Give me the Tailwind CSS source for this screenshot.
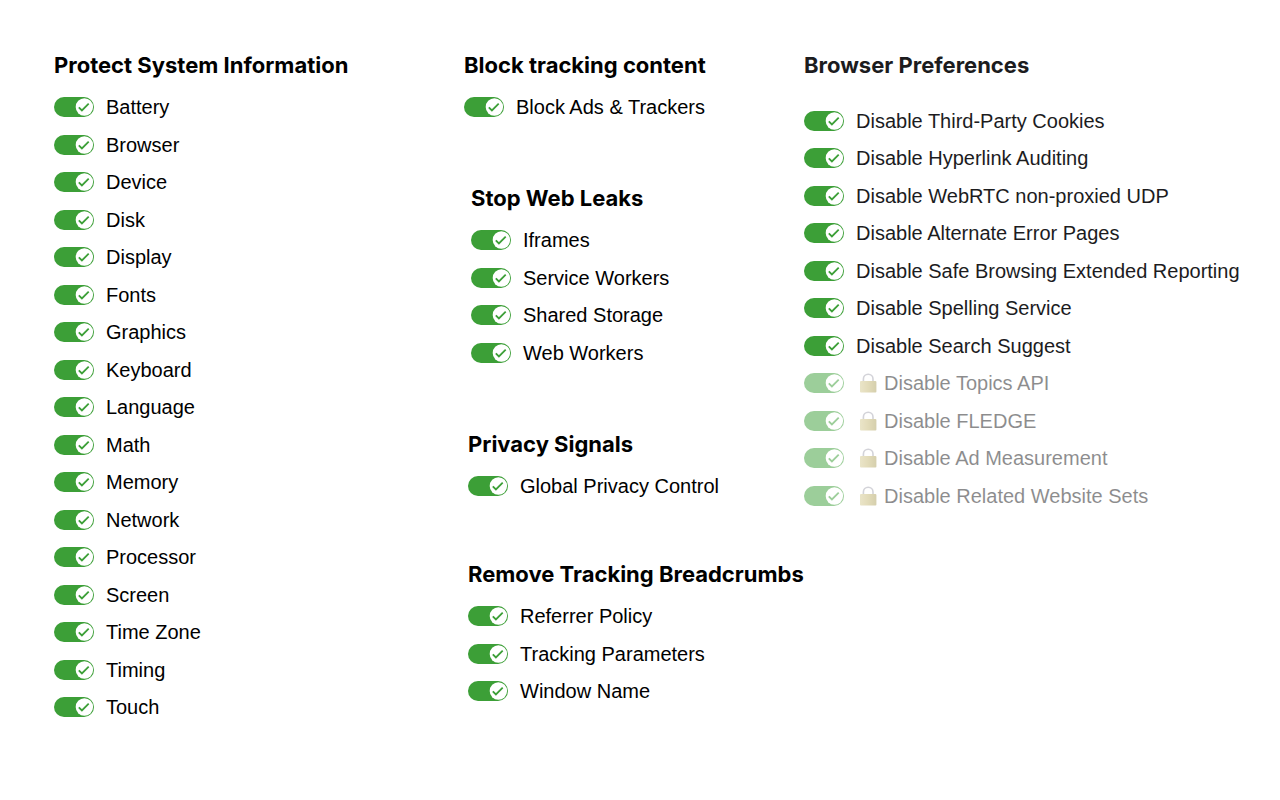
<!DOCTYPE html>
<html lang="en">
  <head>
    <meta charset="UTF-8" />
    <title>Privacy Settings</title>
    <meta name="viewport" content="width=device-width, initial-scale=1.0" />
    <script src="https://cdn.jsdelivr.net/npm/@tailwindcss/browser@4"></script>
  </head>

  <body class="bg-white text-black font-['Liberation_Sans',Arial,sans-serif]">
    <!-- Icons -->
    <svg class="absolute size-0">
      <defs>
        <linearGradient id="brass" x1="0" x2="1" y1="0" y2="0">
          <stop offset="0" stop-color="#d6cb93" />
          <stop offset=".45" stop-color="#c9bb78" />
          <stop offset="1" stop-color="#aca05c" />
        </linearGradient>
      </defs>
      <symbol id="knob" viewBox="0 0 40 20">
        <circle cx="30.4" cy="10" r="8.7" fill="#fff" />
        <path d="M24.8 10.4l3.1 3.1 6.8-6.8" fill="none" stroke="#3c9f37" stroke-width="1.8" />
      </symbol>
      <symbol id="lock" viewBox="0 0 18 20">
        <path d="M3.4 9V6a4.8 4.8 0 0 1 9.6 0V9" fill="none" stroke="#a9a9b4" stroke-width="1.6" />
        <rect x="0" y="8" width="16.4" height="11.4" rx="1" fill="url(#brass)" />
      </symbol>
    </svg>

    <main class="grid grid-cols-[minmax(0,410fr)_minmax(0,340fr)_minmax(0,476fr)] items-start pl-[54px] pt-[51px] pb-12">
      <section>
        <h2 class="mb-[9px] whitespace-nowrap font-['Inter',sans-serif] text-[22px] leading-7 font-bold">Protect System Information</h2>
        <ul data-group="system"></ul>
      </section>

      <div>
        <section class="mb-[58px]">
          <h2 class="mb-[9px] whitespace-nowrap font-['Inter',sans-serif] text-[22px] leading-7 font-bold">Block tracking content</h2>
          <ul data-group="content"></ul>
        </section>
        <section class="mb-[59px] pl-[7px]">
          <h2 class="mb-[9px] whitespace-nowrap font-['Inter',sans-serif] text-[22px] leading-7 font-bold">Stop Web Leaks</h2>
          <ul data-group="leaks"></ul>
        </section>
        <section class="mb-[55px] pl-1">
          <h2 class="mb-[9px] whitespace-nowrap font-['Inter',sans-serif] text-[22px] leading-7 font-bold">Privacy Signals</h2>
          <ul data-group="signals"></ul>
        </section>
        <section class="pl-1">
          <h2 class="mb-[9px] whitespace-nowrap font-['Inter',sans-serif] text-[22px] leading-7 font-bold">Remove Tracking Breadcrumbs</h2>
          <ul data-group="breadcrumbs"></ul>
        </section>
      </div>

      <section class="text-[#1c1c1e]">
        <h2 class="mb-[23px] whitespace-nowrap font-['Inter',sans-serif] text-[22px] leading-7 font-bold">Browser Preferences</h2>
        <ul data-group="browser" class="*:odd:h-[37px] *:even:h-[38px]"></ul>
      </section>
    </main>

    <script>
      const groups = {
        system: [
          "Battery", "Browser", "Device", "Disk", "Display", "Fonts",
          "Graphics", "Keyboard", "Language", "Math", "Memory", "Network",
          "Processor", "Screen", "Time Zone", "Timing", "Touch",
        ],
        content: ["Block Ads & Trackers"],
        leaks: ["Iframes", "Service Workers", "Shared Storage", "Web Workers"],
        signals: ["Global Privacy Control"],
        breadcrumbs: ["Referrer Policy", "Tracking Parameters", "Window Name"],
        browser: [
          "Disable Third-Party Cookies",
          "Disable Hyperlink Auditing",
          "Disable WebRTC non-proxied UDP",
          "Disable Alternate Error Pages",
          "Disable Safe Browsing Extended Reporting",
          "Disable Spelling Service",
          "Disable Search Suggest",
        ],
      };

      // settings the browser does not let us change
      const locked = {
        browser: [
          "Disable Topics API",
          "Disable FLEDGE",
          "Disable Ad Measurement",
          "Disable Related Website Sets",
        ],
      };

      function row(group, name, isLocked) {
        const id = group + "-" + name.toLowerCase().replace(/[^a-z]+/g, "-");
        const li = document.createElement("li");
        li.className = "flex items-center gap-3";
        if (group !== "browser") li.classList.add("h-[38px]", "even:h-[37px]");
        if (isLocked) li.classList.add("opacity-50");
        li.innerHTML = `
          <span class="relative h-5 w-10 shrink-0">
            <input type="checkbox" id="${id}" checked class="peer block h-5 w-10 appearance-none rounded-full bg-gray-400 checked:bg-[#3c9f37]" />
            <svg class="pointer-events-none absolute inset-0 hidden h-5 w-10 peer-checked:block"><use href="#knob" /></svg>
          </span>
          <label for="${id}" class="flex items-center gap-[6px] whitespace-nowrap text-[20px] leading-6">
            ${isLocked ? '<svg class="ml-1 h-5 w-[18px]"><use href="#lock" /></svg>' : ""}
            <span></span>
          </label>`;
        li.querySelector("label span").textContent = name;
        li.querySelector("input").disabled = isLocked;
        return li;
      }

      document.querySelectorAll("[data-group]").forEach((list) => {
        const group = list.dataset.group;
        groups[group].forEach((name) => list.append(row(group, name, false)));
        (locked[group] || []).forEach((name) => list.append(row(group, name, true)));
      });
    </script>
  </body>
</html>
